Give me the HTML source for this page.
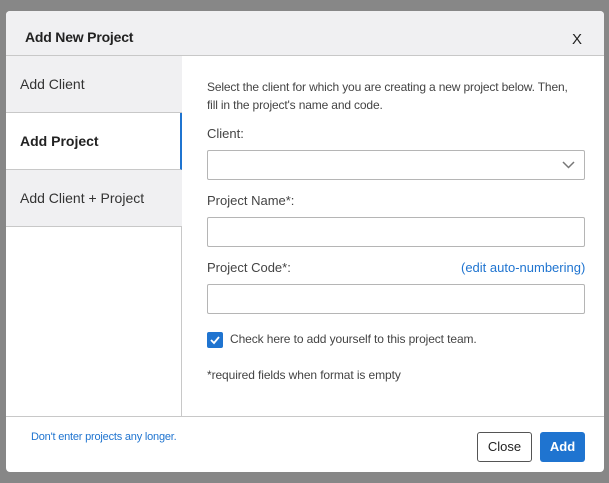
<!DOCTYPE html>
<html><head><style>
*{box-sizing:border-box;margin:0;padding:0}
body{width:609px;height:483px;background:#878787;font-family:"Liberation Sans",Arial,sans-serif;position:relative;overflow:hidden;color:#333}
.dlg{position:absolute;left:6px;top:11px;width:598px;height:461px;background:#fff;border-radius:4px;overflow:hidden}
.hdr{position:absolute;left:0;top:0;width:598px;height:45px;background:#f0f0f2;border-bottom:1px solid #c8c8c8}
.hdr .t{position:absolute;left:19px;top:18px;font-size:14px;font-weight:bold;color:#222;letter-spacing:-0.2px}
.hdr .x{position:absolute;left:566px;top:20px;font-size:15px;color:#222}
.left{position:absolute;left:0;top:45px;width:176px;height:360px;border-right:1px solid #c8c8c8}
.tab{position:absolute;left:0;width:176px;height:57px;background:#f0f0f2;border-bottom:1px solid #c8c8c8;font-size:14px;padding:20px 0 0 14px;color:#333}
.tab.a{background:#fff;font-weight:bold;color:#222;border-right:2px solid #1f74d0}
.r{position:absolute;left:201px;font-size:13px;color:#444}
.inp{position:absolute;left:201px;width:378px;height:30px;border:1px solid #b5b5b5;border-radius:2px}
.foot{position:absolute;left:0;top:405px;width:598px;height:1px;background:#c8c8c8}
.btn{position:absolute;top:421px;height:30px;border-radius:3px;font-size:13px;text-align:center;line-height:28px}
</style></head><body>
<div class="dlg">
<div class="hdr"><div class="t">Add New Project</div><div class="x">X</div></div>
<div class="left">
<div class="tab" style="top:0">Add Client</div>
<div class="tab a" style="top:57px">Add Project</div>
<div class="tab" style="top:114px">Add Client + Project</div>
</div>
<div class="r" style="top:67px;font-size:12px;line-height:18px;width:372px;letter-spacing:-0.15px">Select the client for which you are creating a new project below. Then,<br>fill in the project's name and code.</div>
<div class="r" style="top:115px">Client:</div>
<div class="inp" style="top:139px"><svg style="position:absolute;right:9px;top:10px" width="13" height="8" viewBox="0 0 13 8"><path d="M1 1l5.5 5.5L12 1" fill="none" stroke="#777" stroke-width="1.5"/></svg></div>
<div class="r" style="top:182px">Project Name*:</div>
<div class="inp" style="top:206px"></div>
<div class="r" style="top:249px">Project Code*:</div>
<div class="r" style="top:249px;left:455px;color:#1f74d0">(edit auto-numbering)</div>
<div class="inp" style="top:273px"></div>
<div style="position:absolute;left:201px;top:321px;width:16px;height:16px;background:#1f74d0;border-radius:2px"><svg width="16" height="16" viewBox="0 0 16 16"><path d="M4 8l3 3 5-6" fill="none" stroke="#fff" stroke-width="1.8"/></svg></div>
<div class="r" style="top:321px;left:224px;font-size:12px;letter-spacing:-0.1px">Check here to add yourself to this project team.</div>
<div class="r" style="top:357px;font-size:12px;letter-spacing:-0.1px">*required fields when format is empty</div>
<div class="foot"></div>
<div style="position:absolute;left:25px;top:420px;font-size:11px;color:#1f74d0;letter-spacing:-0.2px">Don't enter projects any longer.</div>
<div class="btn" style="left:471px;width:55px;border:1px solid #555;color:#222">Close</div>
<div class="btn" style="left:534px;width:45px;background:#1f74d0;color:#fff;font-weight:bold;line-height:30px">Add</div>
</div>
</body></html>
